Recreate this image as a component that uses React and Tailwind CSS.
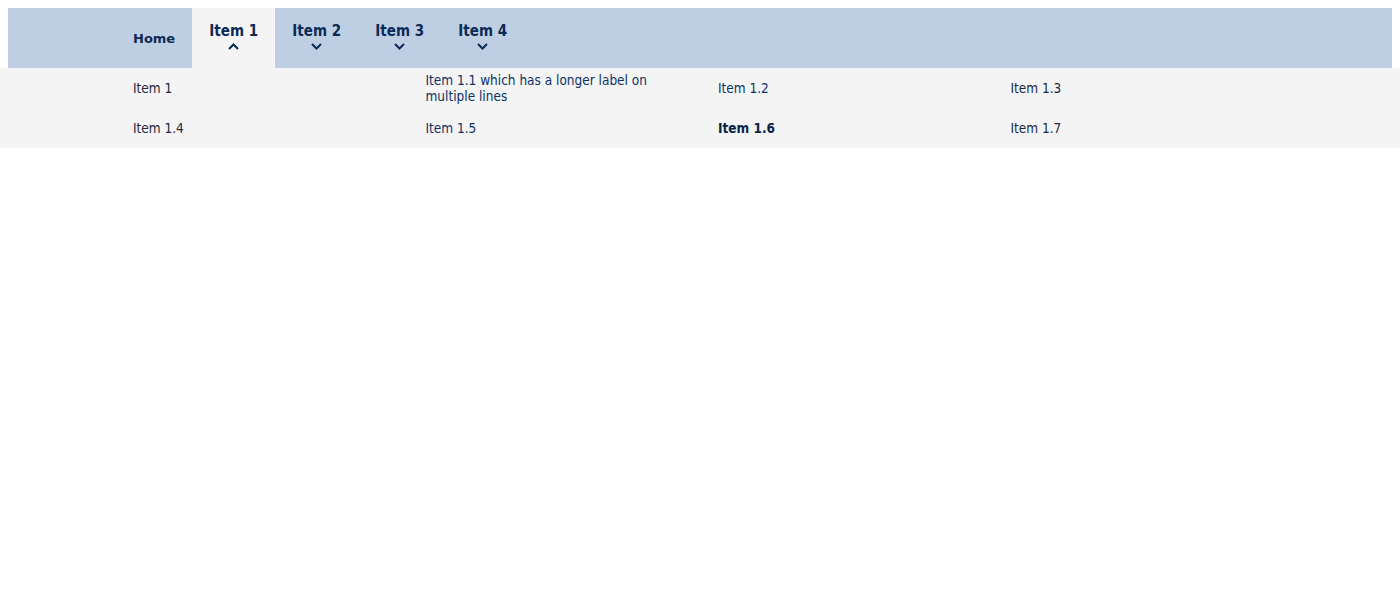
import { useState } from 'react';

const tabs = ['Item 1', 'Item 2', 'Item 3', 'Item 4'];

const links = [
  { label: 'Item 1', tone: 'plain' },
  { label: 'Item 1.1 which has a longer label on multiple lines', tone: 'link' },
  { label: 'Item 1.2', tone: 'link' },
  { label: 'Item 1.3', tone: 'plain' },
  { label: 'Item 1.4', tone: 'plain' },
  { label: 'Item 1.5', tone: 'link' },
  { label: 'Item 1.6', tone: 'bold' },
  { label: 'Item 1.7', tone: 'plain' },
];

const Chevron = ({ up }) => (
  <svg width="11" height="7" viewBox="0 0 11 7" className="mt-[3px]">
    <path
      d={up ? 'M1 6 L5.5 1.5 L10 6' : 'M1 1 L5.5 5.5 L10 1'}
      fill="none"
      stroke="#0b2a55"
      strokeWidth="2"
    />
  </svg>
);

export default function App() {
  const [open, setOpen] = useState(0);

  return (
    <div className="min-h-screen bg-white font-['DejaVu_Sans_Condensed','DejaVu_Sans',sans-serif] text-[#0b2a55]">
      <div className="pt-2">
        <nav className="mx-2 flex h-[60px] bg-[#bfcfe3] pl-[109px]">
          <a className="flex items-center pl-4 pr-[17px] pt-px font-['DejaVu_Sans',sans-serif] text-[13px] font-bold text-[#0b2a55]">
            Home
          </a>
          {tabs.map((t, i) => (
            <button
              key={t}
              onClick={() => setOpen(i)}
              className={`flex w-[83px] flex-col items-center pt-[14px] text-[15px] font-bold leading-[18px] text-[#0b2a55] ${
                open === i ? 'bg-[#f4f4f4]' : ''
              }`}
            >
              {t}
              <Chevron up={open === i} />
            </button>
          ))}
        </nav>
      </div>

      <div className="bg-[#f4f4f4]">
        <ul className="grid grid-cols-4 pl-[133px] pr-[97px] text-[13.5px] leading-4">
          {links.map((l) => (
            <li key={l.label} className="flex h-10 items-center pr-10">
              <a
                className={
                  l.tone === 'bold'
                    ? 'font-bold text-[#0b2346]'
                    : l.tone === 'link'
                      ? 'text-[#0d3366]'
                      : 'text-[#1c2b40]'
                }
              >
                {l.label}
              </a>
            </li>
          ))}
        </ul>
      </div>
    </div>
  );
}
